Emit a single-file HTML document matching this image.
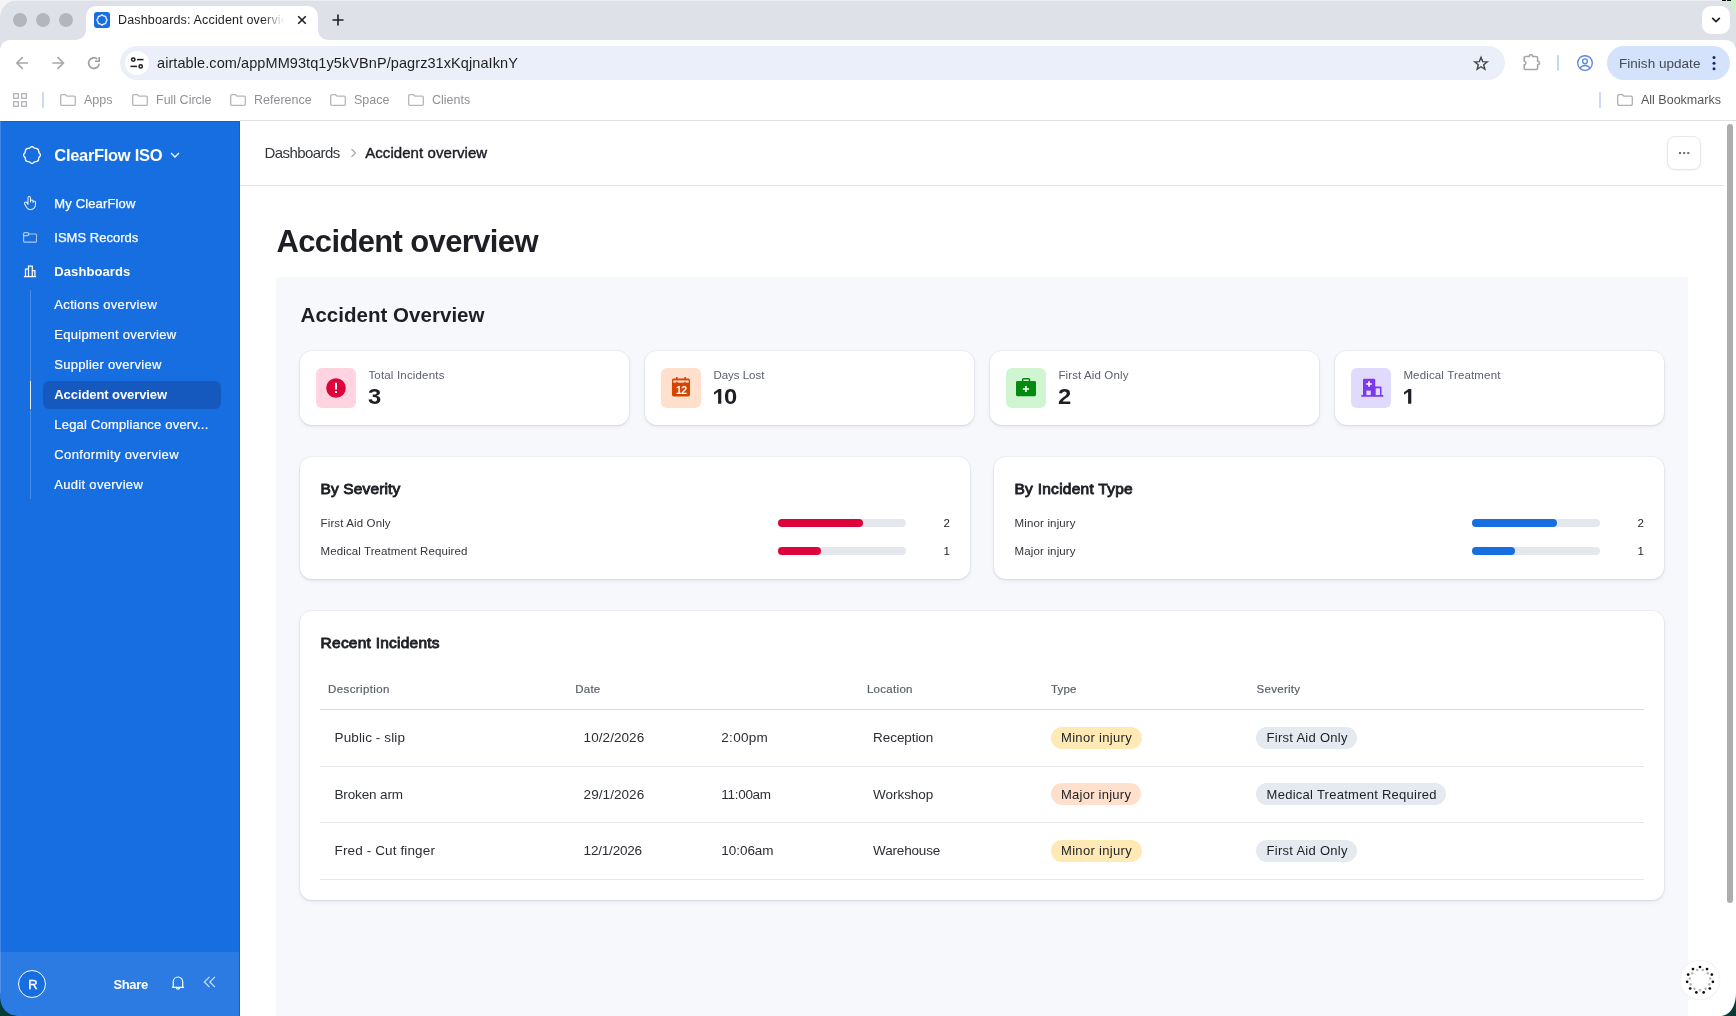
<!DOCTYPE html>
<html>
<head>
<meta charset="utf-8">
<title>Dashboards: Accident overview</title>
<style>
*{box-sizing:border-box;margin:0;padding:0}
html,body{width:1736px;height:1016px;overflow:hidden;background:#fff}
body{font-family:"Liberation Sans",sans-serif;color:#1d1f25;position:relative}
.abs{position:absolute}
#wrap{position:absolute;left:0;top:0;width:1736px;height:1016px;overflow:hidden;will-change:transform}
.t{position:absolute;white-space:nowrap;line-height:1}
/* ---------- browser chrome ---------- */
#tabbar{left:0;top:0;width:1736px;height:40px;background:#dfe1e8}
#toolbar{left:0;top:40px;width:1736px;height:81px;background:#fff}
#chromeline{left:240px;top:120px;width:1496px;height:1px;background:#dfe0e2}
.tl{width:14px;height:14px;border-radius:50%;background:#b4b6bd;top:13px}
#tab{left:86px;top:6px;width:232px;height:34px;background:#fff;border-radius:10px 10px 0 0}
#omni{left:120px;top:46px;width:1385px;height:34px;border-radius:17px;background:#ebeff9}
#finish{left:1607px;top:46px;width:123px;height:34px;border-radius:17px;background:#d4e2fc}
/* ---------- sidebar ---------- */
#side{left:0;top:121px;width:240px;height:895px;background:#176ee1;color:#fff}
#sidefoot{left:0;top:831px;width:240px;height:64px;background:#2b7be3}
.nav{font-size:14px;left:54px}
.sub{font-size:14px;left:54px}
#sel{left:43px;top:260px;width:178px;height:28px;border-radius:6px;background:#1559bf}
/* ---------- main ---------- */
#main{left:240px;top:121px;width:1484px;height:895px;background:#fff}
#hdrline{left:0;top:64px;width:1484px;height:1px;background:#e6e6e8}
#panel{left:36px;top:156px;width:1412px;height:760px;background:#f7f8fc}
.card{position:absolute;background:#fff;border-radius:12px;box-shadow:0 0 0 1px rgba(30,40,90,.04),0 1px 2px rgba(25,30,60,.07),0 2px 5px rgba(25,30,60,.06)}
</style>
</head>
<body>
<div id="wrap">
<!-- ======= BROWSER CHROME ======= -->
<div id="tabbar" class="abs"></div>
<div id="tabhl" class="abs" style="left:0;top:0;width:1736px;height:1px;background:#ebedf2"></div>
<div id="toolbar" class="abs"></div>
<!-- toolbar top rounded corners -->
<div class="abs" style="left:0;top:40px;width:10px;height:10px;background:#dfe1e8"></div>
<div class="abs" style="left:0;top:40px;width:20px;height:20px;background:#fff;border-radius:10px 0 0 0"></div>
<div class="abs" style="left:1726px;top:40px;width:10px;height:10px;background:#dfe1e8"></div>
<div class="abs" style="left:1716px;top:40px;width:20px;height:20px;background:#fff;border-radius:0 10px 0 0"></div>
<!-- traffic lights -->
<div class="abs tl" style="left:13px"></div>
<div class="abs tl" style="left:36px"></div>
<div class="abs tl" style="left:59px"></div>
<!-- tab -->
<div id="tab" class="abs"></div>
<svg class="abs" style="left:76px;top:30px" width="10" height="10"><path d="M10 0V10H0A10 10 0 0 0 10 0Z" fill="#fff"/></svg>
<svg class="abs" style="left:318px;top:30px" width="10" height="10"><path d="M0 0V10H10A10 10 0 0 1 0 0Z" fill="#fff"/></svg>
<div class="abs" style="left:94px;top:12px;width:16px;height:16px;border-radius:3px;background:#176ee1"></div>
<svg class="abs" style="left:94px;top:12px" width="16" height="16" viewBox="0 0 16 16"><path d="M8.00 2.95L8.48 3.08L8.92 3.39L9.29 3.74L9.66 3.98L10.10 4.07L10.61 4.09L11.14 4.18L11.57 4.43L11.82 4.86L11.91 5.39L11.93 5.90L12.02 6.34L12.26 6.71L12.61 7.08L12.92 7.52L13.05 8.00L12.92 8.48L12.61 8.92L12.26 9.29L12.02 9.66L11.93 10.10L11.91 10.61L11.82 11.14L11.57 11.57L11.14 11.82L10.61 11.91L10.10 11.93L9.66 12.02L9.29 12.26L8.92 12.61L8.48 12.92L8.00 13.05L7.52 12.92L7.08 12.61L6.71 12.26L6.34 12.02L5.90 11.93L5.39 11.91L4.86 11.82L4.43 11.57L4.18 11.14L4.09 10.61L4.07 10.10L3.98 9.66L3.74 9.29L3.39 8.92L3.08 8.48L2.95 8.00L3.08 7.52L3.39 7.08L3.74 6.71L3.98 6.34L4.07 5.90L4.09 5.39L4.18 4.86L4.43 4.43L4.86 4.18L5.39 4.09L5.90 4.07L6.34 3.98L6.71 3.74L7.08 3.39L7.52 3.08Z" fill="none" stroke="#fff" stroke-width="1.200" stroke-linejoin="round"/></svg>
<div class="t" id="tabtitle" style="left:118px;top:14px;font-size:12.5px;color:#1f1f1f;width:170px;overflow:hidden;letter-spacing:.16px">Dashboards: Accident overview</div>
<div class="abs" style="left:262px;top:8px;width:26px;height:26px;background:linear-gradient(90deg,rgba(255,255,255,0),#fff 85%)"></div>
<svg class="abs" style="left:297px;top:15px" width="10" height="10" viewBox="0 0 10 10"><path d="M1.2 1.2l7.6 7.6M8.8 1.2l-7.6 7.6" stroke="#1f1f1f" stroke-width="1.6" fill="none"/></svg>
<svg class="abs" style="left:332px;top:14px" width="12" height="12" viewBox="0 0 12 12"><path d="M6 .5v11M.5 6h11" stroke="#1f1f1f" stroke-width="1.6" fill="none"/></svg>
<!-- tab search -->
<div class="abs" style="left:1702px;top:6px;width:28px;height:28px;border-radius:9px;background:#fff"></div>
<svg class="abs" style="left:1710px;top:15px" width="12" height="10" viewBox="0 0 12 10"><path d="M2.200 2.800l3.800 3.800 3.800-3.800" stroke="#1f1f1f" stroke-width="1.700" fill="none"/></svg>
<!-- nav buttons -->
<svg class="abs" style="left:15px;top:55px" width="16" height="16" viewBox="0 0 16 16"><path d="M13 8H2.500M7.700 2.200L1.900 8l5.800 5.800" stroke="#a7a9ad" stroke-width="1.700" fill="none"/></svg>
<svg class="abs" style="left:50px;top:55px" width="16" height="16" viewBox="0 0 16 16"><path d="M2.300 8h10.500M7.600 2.200L13.400 8l-5.800 5.800" stroke="#a7a9ad" stroke-width="1.700" fill="none"/></svg>
<svg class="abs" style="left:86px;top:55px" width="16" height="16" viewBox="0 0 16 16"><path d="M13.200 8.600A5.300 5.300 0 1 1 11.300 4" stroke="#9b9da2" stroke-width="1.600" fill="none"/><path d="M13.200 1.900v4.300H8.900" stroke="#9b9da2" stroke-width="1.600" fill="none"/></svg>
<!-- omnibox -->
<div id="omni" class="abs"></div>
<div class="abs" style="left:125px;top:51px;width:24px;height:24px;border-radius:50%;background:#fff"></div>
<svg class="abs" style="left:129px;top:55px" width="16" height="16" viewBox="0 0 16 16" fill="none" stroke="#1f1f1f" stroke-width="1.5"><circle cx="4.300" cy="4.600" r="1.700"/><path d="M8 4.600h6.500"/><circle cx="11.700" cy="11.400" r="1.700"/><path d="M1.500 11.400h6.500"/></svg>
<div class="t" id="url" style="left:157px;top:56px;font-size:14.5px;color:#1f1f1f;letter-spacing:.08px">airtable.com/appMM93tq1y5kVBnP/pagrz31xKqjnaIknY</div>
<svg class="abs" style="left:1472px;top:54px" width="18" height="18" viewBox="0 0 18 18"><path d="M9.00 3.30L10.68 7.59L15.28 7.86L11.71 10.78L12.88 15.24L9.00 12.75L5.12 15.24L6.29 10.78L2.72 7.86L7.32 7.59Z" stroke="#444649" stroke-width="1.400" fill="none" stroke-linejoin="miter"/></svg>
<!-- extensions -->
<svg class="abs" style="left:1523px;top:54px" width="18" height="18" viewBox="0 0 18 18"><path d="M2.700 2.500H6.300a1.700 1.800 0 0 1 3.400 0H13.100a1.500 1.500 0 0 1 1.500 1.500V7.300a1.800 1.700 0 0 1 0 3.400V14a1.500 1.500 0 0 1-1.500 1.500H2.700A1.500 1.500 0 0 1 1.200 14V10.700a1.700 1.700 0 0 0 0-3.400V4A1.500 1.500 0 0 1 2.700 2.500Z" stroke="#a5a6a9" stroke-width="1.600" fill="none" stroke-linejoin="round"/></svg>
<div class="abs" style="left:1557px;top:55px;width:2px;height:16px;background:#c6d6f6;border-radius:1px"></div>
<svg class="abs" style="left:1576px;top:54px" width="18" height="18" viewBox="0 0 18 18" fill="none" stroke="#5788e3" stroke-width="1.350"><circle cx="9" cy="9" r="7.300"/><circle cx="9" cy="7.300" r="2.400"/><path d="M4 14.200c1.200-1.900 3-2.700 5-2.700s3.800.8 5 2.700"/></svg>
<div id="finish" class="abs"></div>
<div class="t" id="finishtxt" style="left:1619px;top:57px;font-size:13.5px;color:#474a4f;letter-spacing:.03px">Finish update</div>
<svg class="abs" style="left:1711px;top:54px" width="6" height="18" viewBox="0 0 6 18" fill="#1b2a5e"><circle cx="3" cy="3.600" r="1.500"/><circle cx="3" cy="9.200" r="1.500"/><circle cx="3" cy="14.800" r="1.500"/></svg>
<!-- bookmarks bar -->
<svg class="abs" style="left:13px;top:93px" width="14" height="14" viewBox="0 0 14 14" fill="none" stroke="#b1b3b6" stroke-width="1.300"><rect x=".7" y=".7" width="4.600" height="4.600"/><rect x="8.700" y=".7" width="4.600" height="4.600"/><rect x=".7" y="8.700" width="4.600" height="4.600"/><rect x="8.700" y="8.700" width="4.600" height="4.600"/></svg>
<div class="abs" style="left:42px;top:92px;width:2px;height:16px;background:#c9d9f7;border-radius:1px"></div>
<div class="abs" style="left:1599px;top:92px;width:2px;height:16px;background:#c9d9f7;border-radius:1px"></div>
<svg class="abs" style="left:60px;top:94px" width="16" height="12" viewBox="0 0 16 12"><path d="M.7 1.900a1.200 1.200 0 0 1 1.200-1.200h3.600l1.500 1.500h7.100a1.200 1.200 0 0 1 1.200 1.200v6.700a1.200 1.200 0 0 1-1.200 1.200H1.900a1.200 1.200 0 0 1-1.200-1.200z" fill="none" stroke="#b4b6b9" stroke-width="1.300"/></svg>
<div class="t bm" style="left:84px;top:94px;font-size:12.5px;color:#8f9196">Apps</div>
<svg class="abs" style="left:132px;top:94px" width="16" height="12" viewBox="0 0 16 12"><path d="M.7 1.900a1.200 1.200 0 0 1 1.200-1.200h3.600l1.500 1.500h7.100a1.200 1.200 0 0 1 1.200 1.200v6.700a1.200 1.200 0 0 1-1.200 1.200H1.900a1.200 1.200 0 0 1-1.200-1.200z" fill="none" stroke="#b4b6b9" stroke-width="1.300"/></svg>
<div class="t bm" style="left:156px;top:94px;font-size:12.5px;color:#8f9196">Full Circle</div>
<svg class="abs" style="left:230px;top:94px" width="16" height="12" viewBox="0 0 16 12"><path d="M.7 1.900a1.200 1.200 0 0 1 1.200-1.200h3.600l1.500 1.500h7.100a1.200 1.200 0 0 1 1.200 1.200v6.700a1.200 1.200 0 0 1-1.200 1.200H1.900a1.200 1.200 0 0 1-1.200-1.200z" fill="none" stroke="#b4b6b9" stroke-width="1.300"/></svg>
<div class="t bm" style="left:254px;top:94px;font-size:12.5px;color:#8f9196">Reference</div>
<svg class="abs" style="left:330px;top:94px" width="16" height="12" viewBox="0 0 16 12"><path d="M.7 1.900a1.200 1.200 0 0 1 1.200-1.200h3.600l1.500 1.500h7.100a1.200 1.200 0 0 1 1.200 1.200v6.700a1.200 1.200 0 0 1-1.200 1.200H1.900a1.200 1.200 0 0 1-1.200-1.200z" fill="none" stroke="#b4b6b9" stroke-width="1.300"/></svg>
<div class="t bm" style="left:354px;top:94px;font-size:12.5px;color:#8f9196">Space</div>
<svg class="abs" style="left:408px;top:94px" width="16" height="12" viewBox="0 0 16 12"><path d="M.7 1.900a1.200 1.200 0 0 1 1.200-1.200h3.600l1.500 1.500h7.100a1.200 1.200 0 0 1 1.200 1.200v6.700a1.200 1.200 0 0 1-1.200 1.200H1.900a1.200 1.200 0 0 1-1.200-1.200z" fill="none" stroke="#b4b6b9" stroke-width="1.300"/></svg>
<div class="t bm" style="left:432px;top:94px;font-size:12.5px;color:#8f9196">Clients</div>
<svg class="abs" style="left:1617px;top:94px" width="16" height="12" viewBox="0 0 16 12"><path d="M.7 1.900a1.200 1.200 0 0 1 1.200-1.200h3.600l1.500 1.500h7.100a1.200 1.200 0 0 1 1.200 1.200v6.700a1.200 1.200 0 0 1-1.200 1.200H1.900a1.200 1.200 0 0 1-1.200-1.200z" fill="none" stroke="#adafb2" stroke-width="1.300"/></svg>
<div class="t bm" style="left:1641px;top:94px;font-size:12.5px;color:#55575b">All Bookmarks</div>
<div id="chromeline" class="abs"></div>

<!-- ======= SIDEBAR ======= -->
<div id="side" class="abs">
<div id="sidefoot" class="abs"></div>
<div class="abs sideborder" style="left:239px;top:0;width:1px;height:895px;background:#0b5fd8"></div><div class="abs sideborder" style="left:0;top:0;width:240px;height:1px;background:#0b5fd8"></div>
<svg class="abs" style="left:22px;top:24px" width="20" height="20" viewBox="0 0 20 20"><path d="M10.00 1.65L10.54 1.73L11.06 1.97L11.53 2.30L11.97 2.66L12.38 2.98L12.81 3.21L13.28 3.35L13.80 3.42L14.36 3.47L14.93 3.57L15.46 3.77L15.90 4.10L16.23 4.54L16.43 5.07L16.53 5.64L16.58 6.20L16.65 6.72L16.79 7.19L17.02 7.62L17.34 8.03L17.70 8.47L18.03 8.94L18.27 9.46L18.35 10.00L18.27 10.54L18.03 11.06L17.70 11.53L17.34 11.97L17.02 12.38L16.79 12.81L16.65 13.28L16.58 13.80L16.53 14.36L16.43 14.93L16.23 15.46L15.90 15.90L15.46 16.23L14.93 16.43L14.36 16.53L13.80 16.58L13.28 16.65L12.81 16.79L12.38 17.02L11.97 17.34L11.53 17.70L11.06 18.03L10.54 18.27L10.00 18.35L9.46 18.27L8.94 18.03L8.47 17.70L8.03 17.34L7.62 17.02L7.19 16.79L6.72 16.65L6.20 16.58L5.64 16.53L5.07 16.43L4.54 16.23L4.10 15.90L3.77 15.46L3.57 14.93L3.47 14.36L3.42 13.80L3.35 13.28L3.21 12.81L2.98 12.38L2.66 11.97L2.30 11.53L1.97 11.06L1.73 10.54L1.65 10.00L1.73 9.46L1.97 8.94L2.30 8.47L2.66 8.03L2.98 7.62L3.21 7.19L3.35 6.72L3.42 6.20L3.47 5.64L3.57 5.07L3.77 4.54L4.10 4.10L4.54 3.77L5.07 3.57L5.64 3.47L6.20 3.42L6.72 3.35L7.19 3.21L7.62 2.98L8.03 2.66L8.47 2.30L8.94 1.97L9.46 1.73Z" fill="none" stroke="#fff" stroke-width="1.350" stroke-linejoin="round"/></svg>
<div class="t" style="top:26px;font-size:16.5px;left:54.3px;font-weight:700;letter-spacing:-0.305px;">ClearFlow ISO</div>
<svg class="abs" style="left:170px;top:30px" width="10" height="8" viewBox="0 0 10 8"><path d="M1 2l4 4 4-4" fill="none" stroke="#fff" stroke-width="1.300"/></svg>
<svg class="abs" style="left:22.100px;top:73.500px" width="16" height="16" viewBox="0 0 256 256"><path d="M196,88a27.860,27.860,0,0,0-13.350,3.390A28,28,0,0,0,144,74.700V44a28,28,0,0,0-56,0v80l-3.820-6.130A28,28,0,0,0,35.730,146l4.670,8.230C74.810,214.890,89.050,240,136,240a88.100,88.100,0,0,0,88-88V116A28,28,0,0,0,196,88Zm12,64a72.080,72.080,0,0,1-72,72c-37.630,0-47.840-18-81.680-77.680l-4.690-8.270,0-.050A12,12,0,0,1,54,121.610a11.880,11.880,0,0,1,6-1.600,12,12,0,0,1,10.410,6,1.760,1.760,0,0,0,.140.230l18.670,30A8,8,0,0,0,104,152V44a12,12,0,0,1,24,0v68a8,8,0,0,0,16,0V100a12,12,0,0,1,24,0v20a8,8,0,0,0,16,0v-4a12,12,0,0,1,24,0Z" fill="#eaf2fd"/></svg>
<svg class="abs" style="left:23px;top:111px" width="14" height="11" viewBox="0 0 14 11" fill="none" stroke="rgba(255,255,255,.62)" stroke-width="1.200" stroke-linejoin="round"><path d="M.6 1.800a1.200 1.200 0 0 1 1.200-1.200h3l1.300 1.400h6.300a1.200 1.200 0 0 1 1.200 1.200v5.800a1.200 1.200 0 0 1-1.200 1.200H1.800a1.200 1.200 0 0 1-1.200-1.200z"/><path d="M.6 3.600h4.200l1.300-1.600"/></svg>
<svg class="abs" style="left:23px;top:143px" width="14" height="14" viewBox="0 0 14 14" fill="none" stroke="#fff" stroke-width="1.250"><path d="M.9 12.600h12.200M2.500 12.600V5.200h3v7.400M5.500 12.600V2h3.800v10.600M9.300 12.600V6.600h2.600v6"/></svg>
<div class="t" style="top:76px;font-size:13px;left:54.3px;letter-spacing:0.139px;-webkit-text-stroke:.25px #fff;">My ClearFlow</div>
<div class="t" style="top:110px;font-size:13px;left:54.3px;letter-spacing:0.017px;-webkit-text-stroke:.25px #fff;">ISMS Records</div>
<div class="t" style="top:144px;font-size:13px;left:54.3px;font-weight:700;letter-spacing:0.095px;">Dashboards</div>
<div class="abs" style="left:30px;top:169px;width:1px;height:209px;background:rgba(255,255,255,.22)"></div>
<div class="abs" style="left:30px;top:260px;width:1px;height:28px;background:rgba(255,255,255,.85)"></div>
<div id="sel" class="abs"></div>
<div class="t" style="top:177px;font-size:13px;left:54.3px;letter-spacing:0.330px;-webkit-text-stroke:.2px #fff;">Actions overview</div>
<div class="t" style="top:207px;font-size:13px;left:54.3px;letter-spacing:0.279px;-webkit-text-stroke:.2px #fff;">Equipment overview</div>
<div class="t" style="top:237px;font-size:13px;left:54.3px;letter-spacing:0.274px;-webkit-text-stroke:.2px #fff;">Supplier overview</div>
<div class="t" style="top:267px;font-size:13px;left:54.3px;font-weight:700;letter-spacing:-0.085px;">Accident overview</div>
<div class="t" style="top:297px;font-size:13px;left:54.3px;letter-spacing:0.194px;-webkit-text-stroke:.2px #fff;">Legal Compliance overv...</div>
<div class="t" style="top:327px;font-size:13px;left:54.3px;letter-spacing:0.363px;-webkit-text-stroke:.2px #fff;">Conformity overview</div>
<div class="t" style="top:357px;font-size:13px;left:54.3px;letter-spacing:0.304px;-webkit-text-stroke:.2px #fff;">Audit overview</div>
<div class="abs" style="left:18px;top:849px;width:28px;height:28px;border-radius:50%;border:1.500px solid #fff;background:#176ee1"></div>
<div class="t" style="top:857px;font-size:13px;left:28.2px;-webkit-text-stroke:.35px #fff;">R</div>
<div class="t" style="top:857px;font-size:13px;left:113.4px;font-weight:700;letter-spacing:-0.335px;">Share</div>
<svg class="abs" style="left:171px;top:854px" width="14" height="16" viewBox="0 0 14 16" fill="none" stroke="#fff" stroke-width="1.200" stroke-linejoin="round"><path d="M2.300 11.300V6.700a4.700 4.700 0 0 1 9.400 0v4.600l.9 1H1.400z"/><path d="M5.400 12.500a1.600 1.600 0 0 0 3.200 0"/></svg>
<svg class="abs" style="left:203px;top:855px" width="13" height="12" viewBox="0 0 13 12" fill="none" stroke="#cfe1fa" stroke-width="1.200"><path d="M6.500 .8L1.300 6l5.200 5.200M12 .8L6.800 6 12 11.200"/></svg>
</div>
<!-- ======= MAIN ======= -->
<div id="main" class="abs">
<div id="hdrline" class="abs"></div>
<div class="t" style="top:24px;font-size:15px;left:24.6px;letter-spacing:-0.577px;color:#33363d;">Dashboards</div>
<svg class="abs" style="left:109.5px;top:27px" width="7" height="10" viewBox="0 0 7 10"><path d="M1.500 1l4 4-4 4" fill="none" stroke="#a4a8b1" stroke-width="1.100"/></svg>
<div class="t" style="top:24px;font-size:15px;left:125.2px;letter-spacing:0.069px;color:#1d1f25;-webkit-text-stroke:.45px #1d1f25;">Accident overview</div>
<div class="abs" style="left:1427px;top:15px;width:34px;height:34px;border:1px solid #e6e7ea;border-radius:8px;background:#fff;box-shadow:0 1px 2px rgba(0,0,0,.04)"></div>
<svg class="abs" style="left:1438.9px;top:30px" width="12" height="4" viewBox="0 0 12 4" fill="#747474"><rect x="0" y="1" width="2.100" height="2.100"/><rect x="4.100" y="1" width="2.100" height="2.100"/><rect x="8.200" y="1" width="2.100" height="2.100"/></svg>
<div class="t" style="top:105px;font-size:31px;left:36.5px;font-weight:700;letter-spacing:-0.639px;color:#1d1f25;">Accident overview</div>
<div id="panel" class="abs"></div>
<div class="t" style="top:184px;font-size:20.5px;left:60.6px;font-weight:700;letter-spacing:0.028px;color:#1d1f25;">Accident Overview</div>
<div class="card" style="left:60px;top:230px;width:329px;height:74px;"></div>
<div class="abs" style="left:76px;top:247px;width:40px;height:40px;border-radius:6px;background:#ffd4e0"><svg class="abs" style="left:10px;top:10px" width="20" height="20" viewBox="0 0 20 20"><circle cx="10" cy="10" r="9.800" fill="#dc043b"/><rect x="9" y="4.800" width="2" height="6.600" rx=".3" fill="#fff"/><rect x="9" y="13" width="2" height="2.100" rx=".3" fill="#fff"/></svg></div>
<div class="t" style="top:249px;font-size:11.5px;left:128.4px;letter-spacing:0.177px;color:#5b606b;">Total Incidents</div>
<div class="t" style="top:265px;font-size:22px;left:128px;font-weight:700;color:#1d1f25;transform:scaleX(1.08);transform-origin:0 0;">3</div>
<div class="card" style="left:405px;top:230px;width:329px;height:74px;"></div>
<div class="abs" style="left:421px;top:247px;width:40px;height:40px;border-radius:6px;background:#ffe0cc"><svg class="abs" style="left:11px;top:9px" width="18" height="20" viewBox="0 0 18 20"><path d="M4 0h1.600v1.500h6.800V0H14v1.500h2.300A1.700 1.700 0 0 1 18 3.200v14.600a1.700 1.700 0 0 1-1.700 1.700H1.700A1.700 1.700 0 0 1 0 17.800V3.200A1.700 1.700 0 0 1 1.700 1.500H4z" fill="#d54401"/><path d="M1.300 3.400h15.400v2.300H1.300z" fill="#ffd9c7"/><path d="M3.600 5.700L5 4.300l1.400 1.400zM11.600 5.700L13 4.300l1.400 1.400z" fill="#d54401"/><text x="9.200" y="16.600" font-family="Liberation Sans" font-weight="700" font-size="10.500" text-anchor="middle" fill="#fff" letter-spacing="-.6">12</text></svg></div>
<div class="t" style="top:249px;font-size:11.5px;left:473.4px;letter-spacing:-0.018px;color:#5b606b;">Days Lost</div>
<svg class="abs" style="left:474px;top:268px" width="8" height="15" viewBox="0 0 8 15"><path d="M7.300 0H4.600L0 3.300v2.500l4.100-2.700v11.700h3.200z" fill="#1d1f25"/></svg>
<div class="t" style="top:265px;font-size:22px;left:484.3px;font-weight:700;color:#1d1f25;transform:scaleX(1.08);transform-origin:0 0;">0</div>
<div class="card" style="left:750px;top:230px;width:329px;height:74px;"></div>
<div class="abs" style="left:766px;top:247px;width:40px;height:40px;border-radius:6px;background:#cff5d1"><svg class="abs" style="left:10px;top:10px" width="20" height="19" viewBox="0 0 20 19"><path d="M5.900 3.100V1.600A1.600 1.600 0 0 1 7.500 0h5.100a1.600 1.600 0 0 1 1.600 1.600v1.500h4.400A1.400 1.400 0 0 1 20 4.500v12.300a1.400 1.400 0 0 1-1.400 1.400H1.400A1.400 1.400 0 0 1 0 16.800V4.500a1.400 1.400 0 0 1 1.400-1.400zM7.400 1.500v1.600h5.300V1.500z" fill="#048a0e" fill-rule="evenodd"/><path d="M9.150 7.900h1.600v2.300h2.300v1.600h-2.300v2.300h-1.600v-2.300h-2.300v-1.600h2.300z" fill="#fff"/></svg></div>
<div class="t" style="top:249px;font-size:11.5px;left:818.4px;letter-spacing:0.124px;color:#5b606b;">First Aid Only</div>
<div class="t" style="top:265px;font-size:22px;left:818px;font-weight:700;color:#1d1f25;transform:scaleX(1.08);transform-origin:0 0;">2</div>
<div class="card" style="left:1095px;top:230px;width:329px;height:74px;"></div>
<div class="abs" style="left:1111px;top:247px;width:40px;height:40px;border-radius:6px;background:#e0dafd"><svg class="abs" style="left:9.500px;top:10px" width="23" height="20" viewBox="0 0 23 20"><path d="M2 1.700A1 1 0 0 1 3 .7h10.200a1 1 0 0 1 1 1v6.800h5.300a1 1 0 0 1 1 1v7.600h1.800v1.700H.3v-1.700H2z" fill="#7c37ef"/><path d="M7.200 3.200h1.600v2h2v1.600h-2v2H7.200v-2h-2V5.200h2z" fill="#fff"/><rect x="5.400" y="12.600" width="4.400" height="4.500" fill="#e0dafd"/><rect x="14.700" y="10.300" width="4.300" height="6.800" fill="#e0dafd"/></svg></div>
<div class="t" style="top:249px;font-size:11.5px;left:1163.4px;letter-spacing:0.149px;color:#5b606b;">Medical Treatment</div>
<svg class="abs" style="left:1163.9px;top:268px" width="8" height="15" viewBox="0 0 8 15"><path d="M7.300 0H4.600L0 3.300v2.500l4.100-2.700v11.700h3.200z" fill="#1d1f25"/></svg>
<div class="card" style="left:60px;top:336px;width:670px;height:122px;"></div>
<div class="t" style="top:360px;font-size:15.5px;left:80.5px;letter-spacing:0.131px;color:#1d1f25;-webkit-text-stroke:.9px #1d1f25;">By Severity</div>
<div class="t" style="top:397px;font-size:11.5px;left:80.6px;letter-spacing:0.124px;color:#33363d;">First Aid Only</div>
<div class="abs" style="left:538px;top:398px;width:128px;height:8px;border-radius:4px;background:#e4e7ee"></div>
<div class="abs" style="left:538px;top:398px;width:85px;height:8px;border-radius:4px;background:#dc043b"></div>
<div class="t" style="top:397px;font-size:11.5px;right:774px;color:#1d1f25;">2</div>
<div class="t" style="top:425px;font-size:11.5px;left:80.6px;letter-spacing:0.093px;color:#33363d;">Medical Treatment Required</div>
<div class="abs" style="left:538px;top:426px;width:128px;height:8px;border-radius:4px;background:#e4e7ee"></div>
<div class="abs" style="left:538px;top:426px;width:43px;height:8px;border-radius:4px;background:#dc043b"></div>
<div class="t" style="top:425px;font-size:11.5px;right:774px;color:#1d1f25;">1</div>
<div class="card" style="left:754px;top:336px;width:670px;height:122px;"></div>
<div class="t" style="top:360px;font-size:15.5px;left:774.5px;letter-spacing:0.259px;color:#1d1f25;-webkit-text-stroke:.9px #1d1f25;">By Incident Type</div>
<div class="t" style="top:397px;font-size:11.5px;left:774.6px;letter-spacing:0.142px;color:#33363d;">Minor injury</div>
<div class="abs" style="left:1232px;top:398px;width:128px;height:8px;border-radius:4px;background:#e4e7ee"></div>
<div class="abs" style="left:1232px;top:398px;width:85px;height:8px;border-radius:4px;background:#176ee1"></div>
<div class="t" style="top:397px;font-size:11.5px;right:80px;color:#1d1f25;">2</div>
<div class="t" style="top:425px;font-size:11.5px;left:774.6px;letter-spacing:0.142px;color:#33363d;">Major injury</div>
<div class="abs" style="left:1232px;top:426px;width:128px;height:8px;border-radius:4px;background:#e4e7ee"></div>
<div class="abs" style="left:1232px;top:426px;width:43px;height:8px;border-radius:4px;background:#176ee1"></div>
<div class="t" style="top:425px;font-size:11.5px;right:80px;color:#1d1f25;">1</div>
<div class="card" style="left:60px;top:490px;width:1364px;height:289px;"></div>
<div class="t" style="top:514px;font-size:15.5px;left:80.6px;letter-spacing:0.235px;color:#1d1f25;-webkit-text-stroke:.9px #1d1f25;">Recent Incidents</div>
<div class="t" style="top:563px;font-size:11.5px;left:88.1px;letter-spacing:0.387px;color:#5b606b;-webkit-text-stroke:.2px #5b606b;">Description</div>
<div class="t" style="top:563px;font-size:11.5px;left:335.3px;letter-spacing:0.201px;color:#5b606b;-webkit-text-stroke:.2px #5b606b;">Date</div>
<div class="t" style="top:563px;font-size:11.5px;left:626.9px;letter-spacing:0.302px;color:#5b606b;-webkit-text-stroke:.2px #5b606b;">Location</div>
<div class="t" style="top:563px;font-size:11.5px;left:811px;letter-spacing:0.121px;color:#5b606b;-webkit-text-stroke:.2px #5b606b;">Type</div>
<div class="t" style="top:563px;font-size:11.5px;left:1016.6px;letter-spacing:0.279px;color:#5b606b;-webkit-text-stroke:.2px #5b606b;">Severity</div>
<div class="abs" style="left:80px;top:588px;width:1324px;height:1px;background:#d9dce4"></div>
<div class="abs" style="left:80px;top:645px;width:1324px;height:1px;background:#e6e8ed"></div>
<div class="abs" style="left:80px;top:701px;width:1324px;height:1px;background:#e6e8ed"></div>
<div class="abs" style="left:80px;top:758px;width:1324px;height:1px;background:#e6e8ed"></div>
<div class="t" style="top:610px;font-size:13.5px;left:94.5px;letter-spacing:0.122px;color:#2b2e35;">Public - slip</div>
<div class="t" style="top:610px;font-size:13.5px;left:343.6px;letter-spacing:0.067px;color:#2b2e35;">10/2/2026</div>
<div class="t" style="top:610px;font-size:13.5px;left:481.3px;letter-spacing:0.294px;color:#2b2e35;">2:00pm</div>
<div class="t" style="top:610px;font-size:13.5px;left:633.1px;letter-spacing:-0.075px;color:#2b2e35;">Reception</div>
<div class="abs" style="left:811px;top:606px;width:90.7px;height:22px;border-radius:11px;background:#ffeab6"></div>
<div class="t" style="top:610px;font-size:13px;left:821px;letter-spacing:0.319px;color:#1d1f25;">Minor injury</div>
<div class="abs" style="left:1016px;top:606px;width:101.3px;height:22px;border-radius:11px;background:#e5e9f0"></div>
<div class="t" style="top:610px;font-size:13px;left:1026.6px;letter-spacing:0.277px;color:#1d1f25;">First Aid Only</div>
<div class="t" style="top:667px;font-size:13.5px;left:94.5px;letter-spacing:-0.142px;color:#2b2e35;">Broken arm</div>
<div class="t" style="top:667px;font-size:13.5px;left:343.6px;letter-spacing:0.067px;color:#2b2e35;">29/1/2026</div>
<div class="t" style="top:667px;font-size:13.5px;left:481.3px;letter-spacing:-0.291px;color:#2b2e35;">11:00am</div>
<div class="t" style="top:667px;font-size:13.5px;left:633.1px;letter-spacing:-0.047px;color:#2b2e35;">Workshop</div>
<div class="abs" style="left:811px;top:662px;width:89.8px;height:22px;border-radius:11px;background:#ffe0cc"></div>
<div class="t" style="top:667px;font-size:13px;left:821px;letter-spacing:0.247px;color:#1d1f25;">Major injury</div>
<div class="abs" style="left:1016px;top:662px;width:190.4px;height:22px;border-radius:11px;background:#e5e9f0"></div>
<div class="t" style="top:667px;font-size:13px;left:1026.6px;letter-spacing:0.264px;color:#1d1f25;">Medical Treatment Required</div>
<div class="t" style="top:723px;font-size:13.5px;left:94.5px;letter-spacing:0.131px;color:#2b2e35;">Fred - Cut finger</div>
<div class="t" style="top:723px;font-size:13.5px;left:343.6px;letter-spacing:-0.195px;color:#2b2e35;">12/1/2026</div>
<div class="t" style="top:723px;font-size:13.5px;left:481.3px;letter-spacing:-0.041px;color:#2b2e35;">10:06am</div>
<div class="t" style="top:723px;font-size:13.5px;left:633.1px;letter-spacing:-0.168px;color:#2b2e35;">Warehouse</div>
<div class="abs" style="left:811px;top:719px;width:90.7px;height:22px;border-radius:11px;background:#ffeab6"></div>
<div class="t" style="top:723px;font-size:13px;left:821px;letter-spacing:0.319px;color:#1d1f25;">Minor injury</div>
<div class="abs" style="left:1016px;top:719px;width:101.3px;height:22px;border-radius:11px;background:#e5e9f0"></div>
<div class="t" style="top:723px;font-size:13px;left:1026.6px;letter-spacing:0.277px;color:#1d1f25;">First Aid Only</div>
</div>
<div class="abs" style="left:1724px;top:121px;width:12px;height:895px;background:#fff"></div>
<div class="abs" style="left:1727px;top:124px;width:6px;height:779px;border-radius:3px;background:#adadad"></div>
<svg class="abs" style="left:1678px;top:957.7px" width="44" height="44" viewBox="0 0 44 44"><circle cx="22" cy="22" r="20.300" fill="#f0f0f2"/><circle cx="22" cy="22" r="19.600" fill="#fff"/><circle cx="22.00" cy="9.00" r="1.35" fill="#0a0a0f"/><circle cx="24.90" cy="12.12" r="1.25" fill="#b5b5b8"/><circle cx="29.03" cy="11.06" r="1.35" fill="#0a0a0f"/><circle cx="29.78" cy="15.25" r="1.25" fill="#b5b5b8"/><circle cx="33.83" cy="16.60" r="1.35" fill="#0a0a0f"/><circle cx="32.20" cy="20.53" r="1.25" fill="#b5b5b8"/><circle cx="34.87" cy="23.85" r="1.35" fill="#0a0a0f"/><circle cx="31.37" cy="26.28" r="1.25" fill="#b5b5b8"/><circle cx="31.82" cy="30.51" r="1.35" fill="#0a0a0f"/><circle cx="27.57" cy="30.66" r="1.25" fill="#b5b5b8"/><circle cx="25.66" cy="34.47" r="1.35" fill="#0a0a0f"/><circle cx="22.00" cy="32.30" r="1.25" fill="#b5b5b8"/><circle cx="18.34" cy="34.47" r="1.35" fill="#0a0a0f"/><circle cx="16.43" cy="30.66" r="1.25" fill="#b5b5b8"/><circle cx="12.18" cy="30.51" r="1.35" fill="#0a0a0f"/><circle cx="12.63" cy="26.28" r="1.25" fill="#b5b5b8"/><circle cx="9.13" cy="23.85" r="1.35" fill="#0a0a0f"/><circle cx="11.80" cy="20.53" r="1.25" fill="#b5b5b8"/><circle cx="10.17" cy="16.60" r="1.35" fill="#0a0a0f"/><circle cx="14.22" cy="15.25" r="1.25" fill="#b5b5b8"/><circle cx="14.97" cy="11.06" r="1.35" fill="#0a0a0f"/><circle cx="19.10" cy="12.12" r="1.25" fill="#b5b5b8"/></svg>
<svg class="abs" style="left:0;top:990px" width="24" height="26" viewBox="0 0 24 26"><path d="M0 5C0 17 6 26 20 26H0z" fill="#053b38"/></svg>
<svg class="abs" style="left:1712px;top:988px" width="24" height="28" viewBox="0 0 24 28"><path d="M24 5C24 18 18 28 8 28H24z" fill="#053b38"/></svg>
<svg class="abs" style="left:0;top:0" width="18" height="18" viewBox="0 0 18 18"><path d="M0 0H17C7 1 1 7 0 17z" fill="#f4f4f5"/></svg>
<svg class="abs" style="left:1718px;top:0" width="18" height="18" viewBox="0 0 18 18"><path d="M18 0H3C11 2 16 8 18 16z" fill="#cdf3cb"/><path d="M4 0h4v1H4zM9 0h4v1H9z" fill="#111"/></svg>
<div class="abs" style="left:0;top:121px;width:1px;height:872px;background:rgba(255,255,255,.18)"></div>
</div>
</body>
</html>
